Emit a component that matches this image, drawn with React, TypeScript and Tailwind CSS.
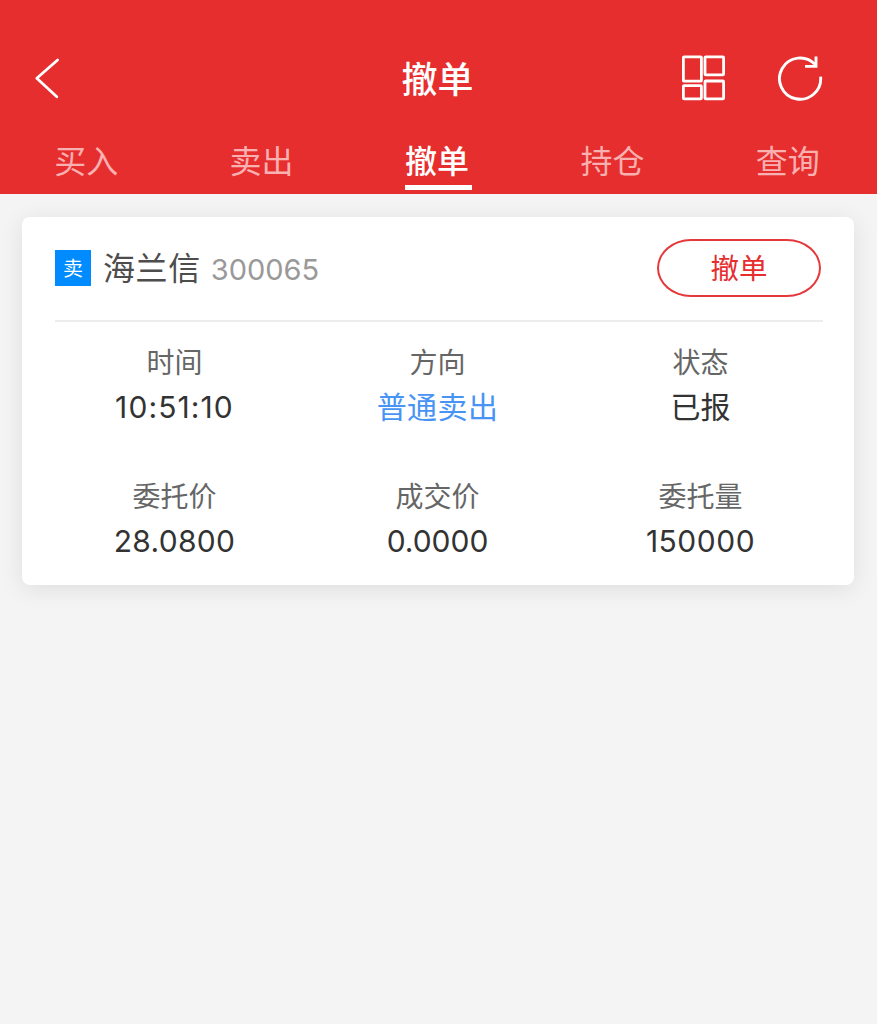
import clsx from 'clsx';
import { useState } from 'react';

type Tab = 'BUY' | 'SELL' | 'CANCEL' | 'POSITION' | 'QUERY';

interface Field {
  label: string;
  value: string;
  className?: string;
}

const tabs: { key: Tab; label: string }[] = [
  { key: 'BUY', label: '买入' },
  { key: 'SELL', label: '卖出' },
  { key: 'CANCEL', label: '撤单' },
  { key: 'POSITION', label: '持仓' },
  { key: 'QUERY', label: '查询' },
];

const order = {
  side: '卖',
  name: '海兰信',
  code: '300065',
  fields: [
    { label: '时间', value: '10:51:10', className: 'tracking-[1.1px] text-[#333]' },
    { label: '方向', value: '普通卖出', className: 'tracking-[0.4px] text-[#4794f5]' },
    { label: '状态', value: '已报' },
    { label: '委托价', value: '28.0800', className: 'tracking-[0.3px] text-[#333]' },
    { label: '成交价', value: '0.0000' },
    { label: '委托量', value: '150000', className: 'tracking-[0.5px] text-[#333]' },
  ] as Field[],
};

function BackIcon() {
  return (
    <svg width="28" height="44" viewBox="0 0 28 44" fill="none" stroke="currentColor" strokeWidth="2.8" strokeLinecap="round" strokeLinejoin="round">
      <path d="M25.6 4 4.8 22.3 24.8 40.7" />
    </svg>
  );
}

function GridIcon() {
  return (
    <svg width="44" height="46" viewBox="0 0 44 46" fill="none" stroke="currentColor" strokeWidth="2.8">
      <rect x="1.4" y="1.8" width="18" height="24.4" rx="0.8" />
      <rect x="1.4" y="30.6" width="18" height="13.2" rx="0.8" />
      <rect x="23" y="1.8" width="18.6" height="18" rx="0.8" />
      <rect x="23" y="26" width="18.6" height="17.8" rx="0.8" />
    </svg>
  );
}

function RefreshIcon() {
  return (
    <svg width="46" height="46" viewBox="0 0 46 46" fill="none" stroke="currentColor" strokeWidth="2.9">
      <path d="M42.6 21.6A20.6 20.6 0 1 1 37.2 9.6" />
      <path d="M38 1.5V11.4H27" strokeLinejoin="miter" />
    </svg>
  );
}

function OrderCard() {
  return (
    <section className="mx-[22px] mt-[23px] h-[368px] w-[832px] rounded-lg bg-white shadow-[0_4px_24px_rgba(0,0,0,0.09)]">
      <div className="mr-[31px] ml-[33px] flex h-[105px] items-center border-b-2 border-[#ededed] pb-[2px]">
        <span className="flex size-9 items-center justify-center bg-[#008cff] pt-0.5 text-[20px] leading-none text-white">
          {order.side}
        </span>
        <span className="ml-3 pt-0.5 text-[32px] leading-none tracking-[0.6px] text-[#4d4d4d]">{order.name}</span>
        <span className="ml-2.5 pt-1 text-[29px] leading-none text-[#999]">{order.code}</span>
        <button className="mr-0.5 ml-auto h-[58px] w-[164px] rounded-[34px/29px] border-2 border-[#e5383b] pt-[3px] text-[28.5px] leading-none text-[#e62e2e]">
          {order.side === '卖' ? '撤单' : '撤买'}
        </button>
      </div>

      <dl className="grid grid-cols-3 gap-y-11 pr-[22px] pl-[21px] pt-5 text-center">
        {order.fields.map((f) => (
          <div key={f.label}>
            <dt className="text-[28px] leading-[42px] text-[#666]">{f.label}</dt>
            <dd className={clsx('-mt-px mb-px text-[30px] leading-[48px]', f.className ?? 'text-[#333]')}>
              {f.value}
            </dd>
          </div>
        ))}
      </dl>
    </section>
  );
}

export default function App() {
  const [activeTab, setActiveTab] = useState<Tab>('CANCEL');

  return (
    <div className="min-h-screen w-[877px] bg-[#f4f4f4] font-['Inter','Noto_Sans_CJK_SC',sans-serif]">
      <header className="h-[194px] bg-[#e62e2e] pt-[46px] text-white">
        <div className="grid h-16 grid-cols-3 items-center px-8">
          <button className="justify-self-start">
            <BackIcon />
          </button>
          <h1 className="pt-[3px] pr-[2px] text-center text-[36px] leading-none font-medium">撤单</h1>
          <div className="flex items-center justify-end gap-[52px] pr-[21px]">
            <GridIcon />
            <RefreshIcon />
          </div>
        </div>

        <nav className="mt-6 grid grid-cols-5">
          {tabs.map((tab) => (
            <button
              key={tab.key}
              onClick={() => setActiveTab(tab.key)}
              className={clsx(
                'h-14 w-[67px] justify-self-center border-b-[5px] pt-[5px] pr-[3px] text-[32px] leading-none whitespace-nowrap',
                activeTab === tab.key ? 'border-white font-medium' : 'border-transparent text-[#f9b0b0]',
              )}
            >
              {tab.label}
            </button>
          ))}
        </nav>
      </header>

      <OrderCard />
    </div>
  );
}
